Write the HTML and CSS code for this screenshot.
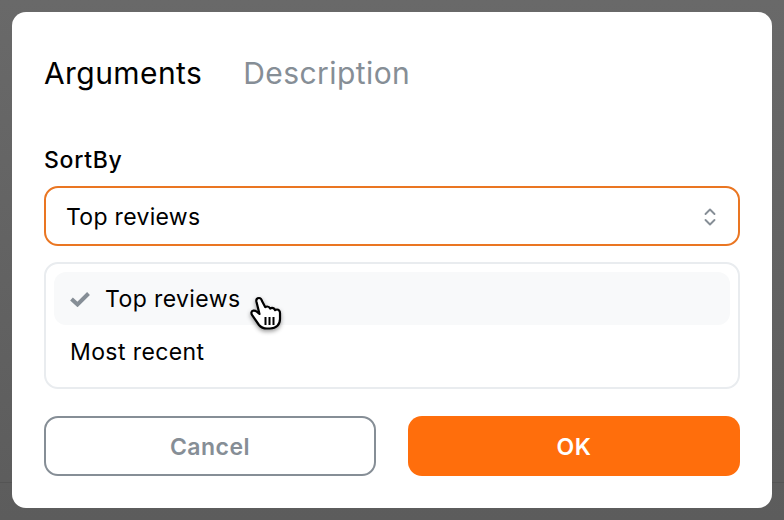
FILE: index.html
```html
<!DOCTYPE html>
<html lang="en">
<head>
<meta charset="utf-8">
<title>Arguments</title>
<link rel="stylesheet" href="styles.css">
</head>
<body>
<div class="backdrop">
  <div class="modal">
    <div class="tabs">
      <span class="tab tab-active">Arguments</span>
      <span class="tab">Description</span>
    </div>
    <div class="label">SortBy</div>
    <div class="select">
      <span>Top reviews</span>
      <svg class="chevrons" width="14" height="20" viewBox="0 0 14 20" fill="none" stroke="#868e96" stroke-width="1.9" stroke-linecap="round" stroke-linejoin="round">
        <path d="M2.5 7 7 2.5 11.5 7"/>
        <path d="M2.5 13 7 17.5 11.5 13"/>
      </svg>
    </div>
    <div class="menu">
      <div class="option option-selected">
        <svg class="check" width="20" height="16" viewBox="0 0 20 16" fill="none" stroke="#868e96" stroke-width="4">
          <path d="M1.5 8 7.5 13.5 18.5 2.5"/>
        </svg>
        <span>Top reviews</span>
      </div>
      <div class="option">Most recent</div>
      <svg class="cursor" width="34" height="38" viewBox="0 0 34 38">
        <path d="M9 2c-2 0-3 1.500-2.600 3.500L9.500 18 6.500 15.500c-2-1.600-4.500-1-5 .8-.3 1.200.2 2.300 1 3.400L9 29c2 2.500 4.500 3.500 8 3.500h3c6.500 0 10-4 10-9.500v-6c0-2.200-1.400-3.500-3-3.500-.8 0-1.400.3-1.900.7-.6-1.500-1.700-2.300-3-2.300-.8 0-1.400.2-2 .6-.6-1.300-1.600-2-2.900-2-.8 0-1.500.2-2 .6L12 5C11.500 3 10.500 2 9 2z" fill="#fff" stroke="#000" stroke-width="2.200" stroke-linejoin="round"/>
        <path d="M15.500 21v8M19.500 21v8M23.500 21v8" stroke="#000" stroke-width="2" fill="none"/>
      </svg>
    </div>
    <div class="actions">
      <button class="btn btn-cancel">Cancel</button>
      <button class="btn btn-ok">OK</button>
    </div>
  </div>
</div>
</body>
</html>
```

FILE: styles.css
```css
* { box-sizing: border-box; }
html, body { margin: 0; padding: 0; }
body { font-family: Inter, "Liberation Sans", sans-serif; }
.backdrop {
  width: 784px;
  height: 520px;
  padding: 12px;
  background:
    linear-gradient(#545454, #545454) 0 482px / 100% 1px no-repeat,
    linear-gradient(#696969, #5c5c5c);
}
.modal {
  width: 760px;
  height: 496px;
  background: #fff;
  border-radius: 14px;
  padding: 38px 32px 32px;
  display: flex;
  flex-direction: column;
}
.tabs {
  display: flex;
  gap: 41px;
  font-size: 30px;
  line-height: 46px;
  letter-spacing: 0.42px;
  color: #868e96;
}
.tab-active { color: #000; }
.label {
  margin-top: 49px;
  font-size: 23px;
  font-weight: 500;
  line-height: 30px;
  letter-spacing: 0.7px;
  color: #000;
}
.select {
  margin-top: 11px;
  height: 60px;
  border: 2px solid #ea7622;
  border-radius: 14px;
  padding: 1px 21px 0 20px;
  display: flex;
  align-items: center;
  justify-content: space-between;
  font-size: 23px;
  letter-spacing: 0.3px;
  color: #000;
}
.menu {
  position: relative;
  margin-top: 16px;
  height: 127px;
  border: 2px solid #e9ecef;
  border-radius: 14px;
  padding: 8px;
}
.option {
  height: 53px;
  padding: 0 16px;
  display: flex;
  align-items: center;
  font-size: 23px;
  letter-spacing: 0.4px;
  color: #000;
  border-radius: 12px;
}
.option-selected { background: #f8f9fa; gap: 15px; }
.cursor {
  position: absolute;
  left: 204px;
  top: 32px;
  filter: drop-shadow(0 2px 2px rgba(0, 0, 0, 0.4));
}
.actions {
  margin-top: 27px;
  display: grid;
  grid-template-columns: 1fr 1fr;
  gap: 32px;
}
.btn {
  height: 60px;
  padding: 2px 0 0;
  border-radius: 14px;
  font-family: inherit;
  font-size: 23px;
  font-weight: 600;
  letter-spacing: 0.5px;
}
.btn-cancel { background: #fff; border: 2px solid #868e96; color: #868e96; }
.btn-ok { background: #ff6e0c; border: none; color: #fff; }
```
